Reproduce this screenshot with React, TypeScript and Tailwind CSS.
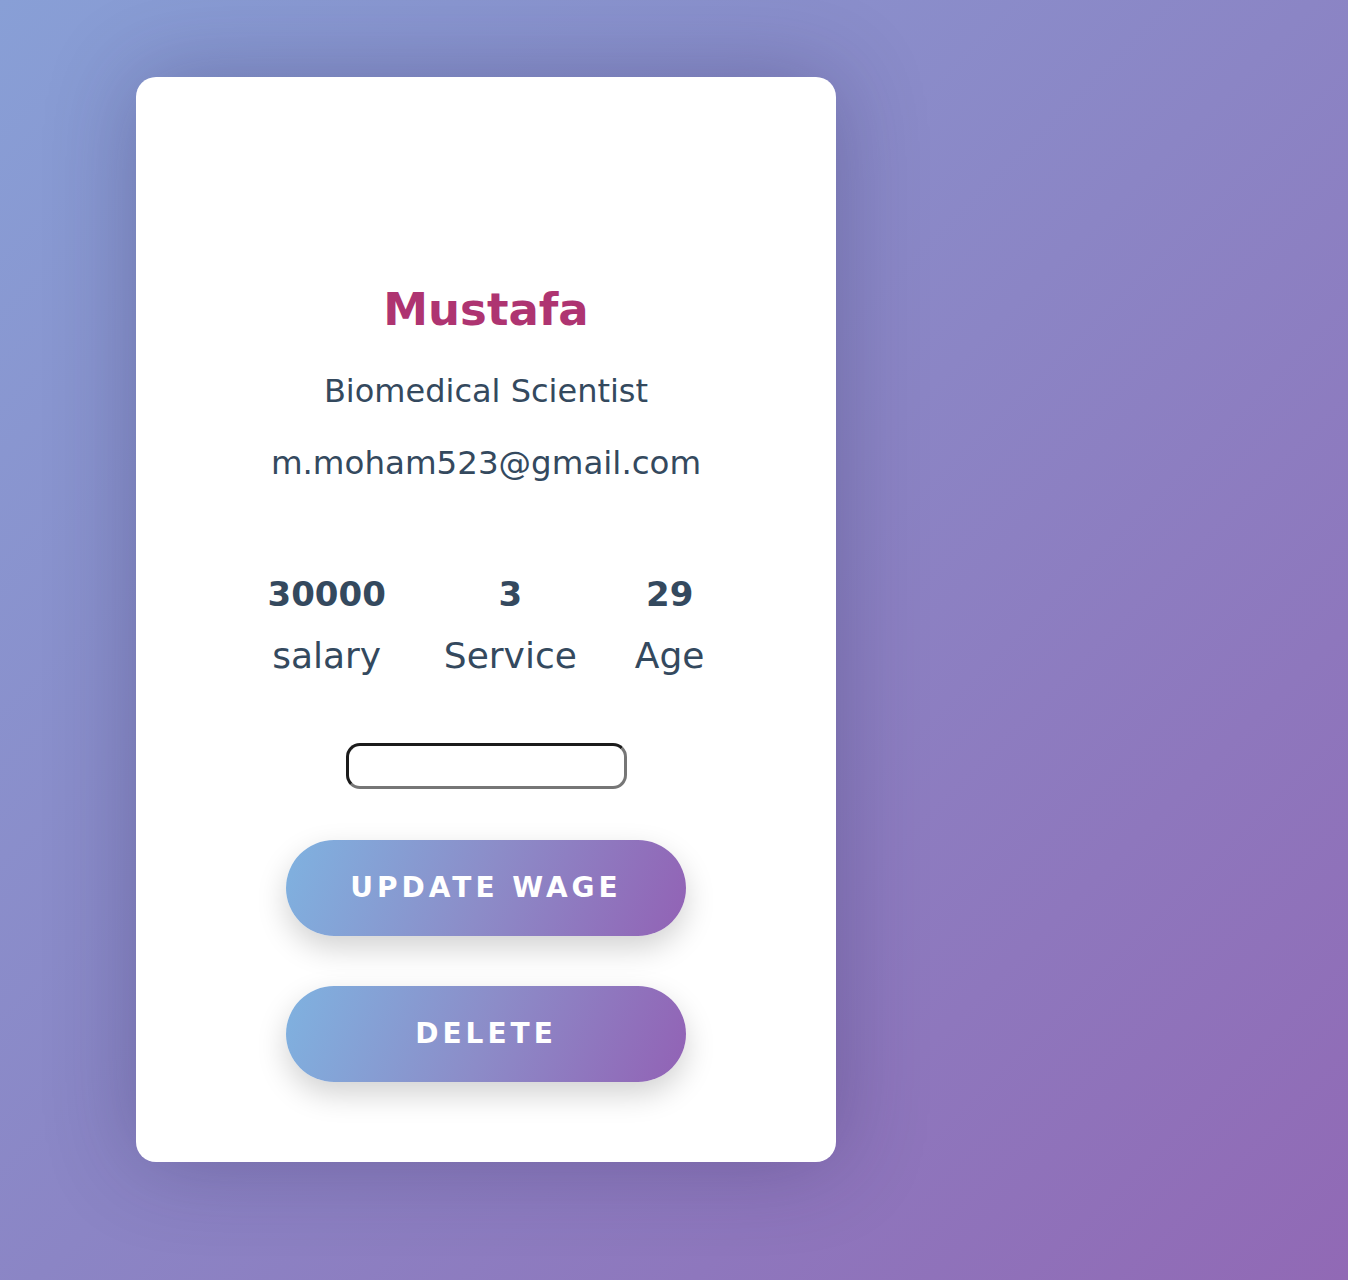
import React from "react";

const stats = [
  { value: "30000", label: "salary" },
  { value: "3", label: "Service" },
  { value: "29", label: "Age" },
];

function GradientButton({ children }: { children: React.ReactNode }) {
  return (
    <button className="flex h-[96px] w-[400px] items-center justify-center rounded-full bg-[linear-gradient(110deg,#7fb2e0,#8c8cc8_50%,#9262b5)] text-[28px] font-bold uppercase tracking-[4px] text-white shadow-[0_12px_30px_rgba(0,0,0,0.18)]">
      {children}
    </button>
  );
}

export default function App() {
  return (
    <div className="min-h-screen bg-[linear-gradient(135deg,#889fd6,#8b85c5_50%,#9169b5)] pl-[136px] pt-[77px] pb-[118px] font-['DejaVu_Sans',sans-serif] text-[#34495e]">
      <div className="flex w-[700px] flex-col items-center rounded-[20px] bg-white pt-[203px] pb-[80px] shadow-[0_0_90px_rgba(40,30,80,0.3)]">
        <h1 className="text-[45px] leading-[60px] font-bold text-[#ae3471]">Mustafa</h1>
        <p className="mt-[31px] text-[32px] leading-[40px]">Biomedical Scientist</p>
        <p className="mt-[32px] text-[32.5px] leading-[40px]">m.moham523@gmail.com</p>

        <div className="mt-[89px] flex justify-center gap-[58px]">
          {stats.map((stat) => (
            <div key={stat.label} className="flex flex-col items-center">
              <span className="text-[34px] leading-[44px] font-bold">{stat.value}</span>
              <span className="mt-[18px] text-[36px] leading-[44px]">{stat.label}</span>
            </div>
          ))}
        </div>

        <input
          type="text"
          className="mt-[65px] h-[46px] w-[281px] rounded-[14px] border-[3px] border-t-[#1b1b1b] border-l-[#1b1b1b] border-r-[#767676] border-b-[#767676] bg-white px-3 outline-none"
        />

        <div className="mt-[51px]">
          <GradientButton>Update Wage</GradientButton>
        </div>
        <div className="mt-[50px]">
          <GradientButton>Delete</GradientButton>
        </div>
      </div>
    </div>
  );
}
